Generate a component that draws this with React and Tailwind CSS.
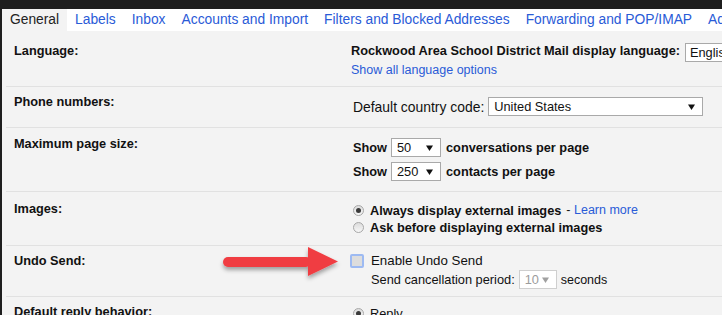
import React from 'react'

const tabs = ['General', 'Labels', 'Inbox', 'Accounts and Import', 'Filters and Blocked Addresses', 'Forwarding and POP/IMAP', 'Add-ons']

function Caret({ muted }) {
  return (
    <svg width="7" height="6" viewBox="0 0 7 6" className="shrink-0">
      <path d="M0 0.5 L7 0.5 L3.5 6 Z" fill={muted ? '#a0a0a0' : '#111'} />
    </svg>
  )
}

function Select({ value, className = '', muted = false }) {
  return (
    <div
      className={`flex items-center justify-between h-[19px] pl-[5px] pr-[7px] bg-white border font-normal text-[12.8px] ${
        muted ? 'border-[#cfcfcf] text-[#9c9c9c]' : 'border-[#a9a9a9] text-[#111]'
      } ${className}`}
    >
      <span className="leading-[16px]">{value}</span>
      <Caret muted={muted} />
    </div>
  )
}

function Radio({ checked }) {
  return (
    <span className="w-[11px] h-[11px] rounded-full border border-[#a8a8a8] bg-gradient-to-b from-[#dcdcdc] to-[#f7f7f7] flex items-center justify-center shrink-0">
      {checked && <span className="w-[5px] h-[5px] rounded-full bg-[#3a3a3a]" />}
    </span>
  )
}

function Row({ label, labelPad, height, last, children }) {
  return (
    <div className={`flex ml-[4px] ${last ? '' : 'border-b border-[#e1e1e1]'} ${height}`}>
      <div className={`w-[344px] shrink-0 pl-[8px] font-bold text-[12.75px] leading-[16px] ${labelPad}`}>{label}</div>
      <div className="flex-1 min-w-0">{children}</div>
    </div>
  )
}

export default function App() {
  return (
    <div
      className="w-[722px] h-[315px] overflow-hidden bg-[#1e1e1e] pt-[9px] pl-[2px] text-[12.8px] leading-[16px] text-[#111]"
      style={{ fontFamily: '"Liberation Sans", Arial, sans-serif' }}
    >
      <div className="h-full bg-[#f3f3f3] relative">
        {/* tab bar */}
        <div className="flex h-[22px] bg-white whitespace-nowrap text-[13.8px]">
          {tabs.map((t, i) => (
            <div
              key={t}
              className={`flex items-center px-[8px] ${i === 0 ? 'bg-[#f3f3f3] text-[#222]' : 'text-[#2a5bd7]'}`}
            >
              {t}
            </div>
          ))}
        </div>

        <Row label="Language:" labelPad="pt-[12px]" height="h-[56px]">
          <div className="pt-[12px] pl-[1px] whitespace-nowrap">
            <div className="flex items-start gap-[5px]">
              <span className="font-bold text-[12.75px] leading-[16px]">Rockwood Area School District Mail display language:</span>
              <div className="flex items-center h-[19px] pl-[4px] bg-white border border-[#a9a9a9] w-[60px]">English</div>
            </div>
            <div className="leading-[16px] text-[12.5px] text-[#2a5bd7]">Show all language options</div>
          </div>
        </Row>

        <Row label="Phone numbers:" labelPad="pt-[7px]" height="h-[41px]">
          <div className="pt-[10px] pl-[3px] flex items-center gap-[4px] whitespace-nowrap">
            <span className="leading-[16px] text-[13.9px]">Default country code:</span>
            <Select value="United States" className="w-[215px] pr-[6px]" />
          </div>
        </Row>

        <Row label="Maximum page size:" labelPad="pt-[8px]" height="h-[64px]">
          <div className="pt-[10px] pl-[3px] flex flex-col gap-[5px] font-bold text-[12.75px] whitespace-nowrap">
            <div className="flex items-center gap-[4px]">
              <span>Show</span>
              <Select value="50" className="w-[50px]" />
              <span className="ml-[1px]">conversations per page</span>
            </div>
            <div className="flex items-center gap-[4px]">
              <span>Show</span>
              <Select value="250" className="w-[50px]" />
              <span className="ml-[1px]">contacts per page</span>
            </div>
          </div>
        </Row>

        <Row label="Images:" labelPad="pt-[9px]" height="h-[54px]">
          <div className="pt-[10px] pl-[3px] whitespace-nowrap leading-[17px]">
            <div className="flex items-center gap-[6px] h-[17px]">
              <Radio checked />
              <span className="font-bold text-[12.75px]">Always display external images</span>
              <span className="-ml-[1px] text-[12.5px]">
                - <span className="text-[#2a5bd7]">Learn more</span>
              </span>
            </div>
            <div className="flex items-center gap-[6px] h-[17px]">
              <Radio />
              <span className="font-bold text-[12.75px]">Ask before displaying external images</span>
            </div>
          </div>
        </Row>

        <Row label="Undo Send:" labelPad="pt-[7px]" height="h-[51px]">
          <div className="pt-[7px] whitespace-nowrap">
            <div className="flex items-center gap-[7px] h-[16px]">
              <span className="w-[14px] h-[14px] rounded-[2px] border-2 border-[#9dbaf2] bg-[#dddddd] shrink-0" />
              <span className="text-[13.3px] leading-[16px]">Enable Undo Send</span>
            </div>
            <div className="flex items-center gap-[4px] mt-[1px] pl-[21px]">
              <span className="leading-[16px]">Send cancellation period:</span>
              <Select value="10" muted className="w-[38px] h-[18px]" />
              <span className="leading-[16px] text-[12.5px]">seconds</span>
            </div>
          </div>
        </Row>

        <Row label="Default reply behavior:" labelPad="pt-[7px]" height="h-[40px]" last>
          <div className="pt-[8px] pl-[3px] flex items-center gap-[6px] h-[25px]">
            <Radio checked />
            <span>Reply</span>
          </div>
        </Row>

        {/* annotation arrow */}
        <svg className="absolute left-[215px] top-[235px]" width="130" height="50" viewBox="0 0 130 50">
          <defs>
            <filter id="sh" x="-20%" y="-40%" width="140%" height="180%">
              <feDropShadow dx="0" dy="3" stdDeviation="2" floodColor="#000" floodOpacity="0.35" />
            </filter>
          </defs>
          <g filter="url(#sh)" fill="#f03e42">
            <rect x="6" y="13" width="88" height="10" rx="5" />
            <path d="M91 3 L121 17.5 L91 32 Z" />
          </g>
        </svg>
      </div>
    </div>
  )
}
